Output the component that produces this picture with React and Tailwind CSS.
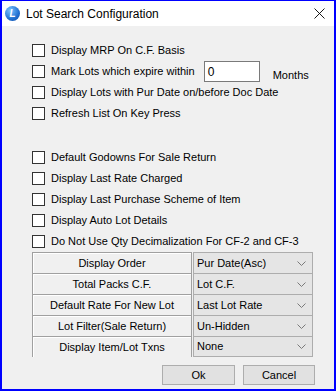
import React from "react";

const font = { fontFamily: '"Liberation Sans", Arial, sans-serif' };

function Check({ label, children }) {
  return (
    <div className="flex items-center h-[21px]">
      <div className="w-[13px] h-[13px] bg-white border border-[#333333] shrink-0" />
      <span className="ml-[6px] text-[11px] text-black whitespace-nowrap">{label}</span>
      {children}
    </div>
  );
}

function Chevron() {
  return (
    <svg width="9" height="5" viewBox="0 0 9 5" className="shrink-0">
      <polyline points="0.5,0.5 4.5,4.5 8.5,0.5" fill="none" stroke="#7a7a7a" strokeWidth="1" />
    </svg>
  );
}

function Row({ label, value, last }) {
  return (
    <div className="flex h-[21px]">
      <div className="w-[160px] flex items-center justify-center text-[11px] text-black border-l border-r border-t border-[#a0a0a0] bg-[#f0f0f0] shadow-[inset_1px_1px_0_#ffffff]">
        {label}
      </div>
      <div className="w-[1px]" />
      <div
        className={
          "w-[120px] flex items-center justify-between pl-[3px] pr-[6px] text-[11px] text-black bg-[#e5e5e5] border-l border-r border-t border-[#adadad] " +
          (last ? "border-b" : "")
        }
      >
        <span>{value}</span>
        <Chevron />
      </div>
    </div>
  );
}

export default function App() {
  return (
    <div
      className="w-[336px] h-[391px] bg-[#f0f0f0] border-[#0000ff] border-l-2 border-r-2 border-b-2 border-t flex flex-col overflow-hidden"
      style={font}
    >
      <div className="h-[25px] bg-white flex items-center shrink-0">
        <div className="ml-[3px] w-[15px] h-[15px] rounded-full bg-[radial-gradient(circle_at_35%_30%,#7cc4ff,#1f6fd1_60%,#0d4aa0)] flex items-center justify-center">
          <span className="text-white text-[10px] font-bold leading-none italic">L</span>
        </div>
        <span className="ml-[6px] text-[12px] text-black">Lot Search Configuration</span>
        <svg width="11" height="11" viewBox="0 0 11 11" className="ml-auto mr-[9px]">
          <line x1="0.5" y1="0.5" x2="10.5" y2="10.5" stroke="#000" strokeWidth="0.9" />
          <line x1="10.5" y1="0.5" x2="0.5" y2="10.5" stroke="#000" strokeWidth="0.9" />
        </svg>
      </div>

      <div className="pl-[30px] pt-[14px] flex flex-col">
        <Check label="Display MRP On C.F. Basis" />
        <Check label="Mark Lots which expire within">
          <div className="ml-[9px] w-[56px] h-[21px] bg-white border border-[#7a7a7a] flex items-center pl-[3px] text-[12px] text-black">
            0
          </div>
          <span className="ml-[13px] mt-[8px] text-[11px] text-black">Months</span>
        </Check>
        <Check label="Display Lots with Pur Date on/before Doc Date" />
        <Check label="Refresh List On Key Press" />

        <div className="h-[23px]" />

        <Check label="Default Godowns For Sale Return" />
        <Check label="Display Last Rate Charged" />
        <Check label="Display Last Purchase Scheme of Item" />
        <Check label="Display Auto Lot Details" />
        <Check label="Do Not Use Qty Decimalization For CF-2 and CF-3" />

        <div className="flex flex-col">
          <Row label="Display Order" value="Pur Date(Asc)" />
          <Row label="Total Packs C.F." value="Lot C.F." />
          <Row label="Default Rate For New Lot" value="Last Lot Rate" />
          <Row label="Lot Filter(Sale Return)" value="Un-Hidden" />
          <Row label="Display Item/Lot Txns" value="None" last />
        </div>

        <div className="flex mt-[8px] ml-[130px] gap-[8px]">
          <button className="w-[73px] h-[20px] bg-[#e1e1e1] border border-[#adadad] text-[11px] text-black">
            Ok
          </button>
          <button className="w-[72px] h-[20px] bg-[#e1e1e1] border border-[#adadad] text-[11px] text-black">
            Cancel
          </button>
        </div>
      </div>
    </div>
  );
}
